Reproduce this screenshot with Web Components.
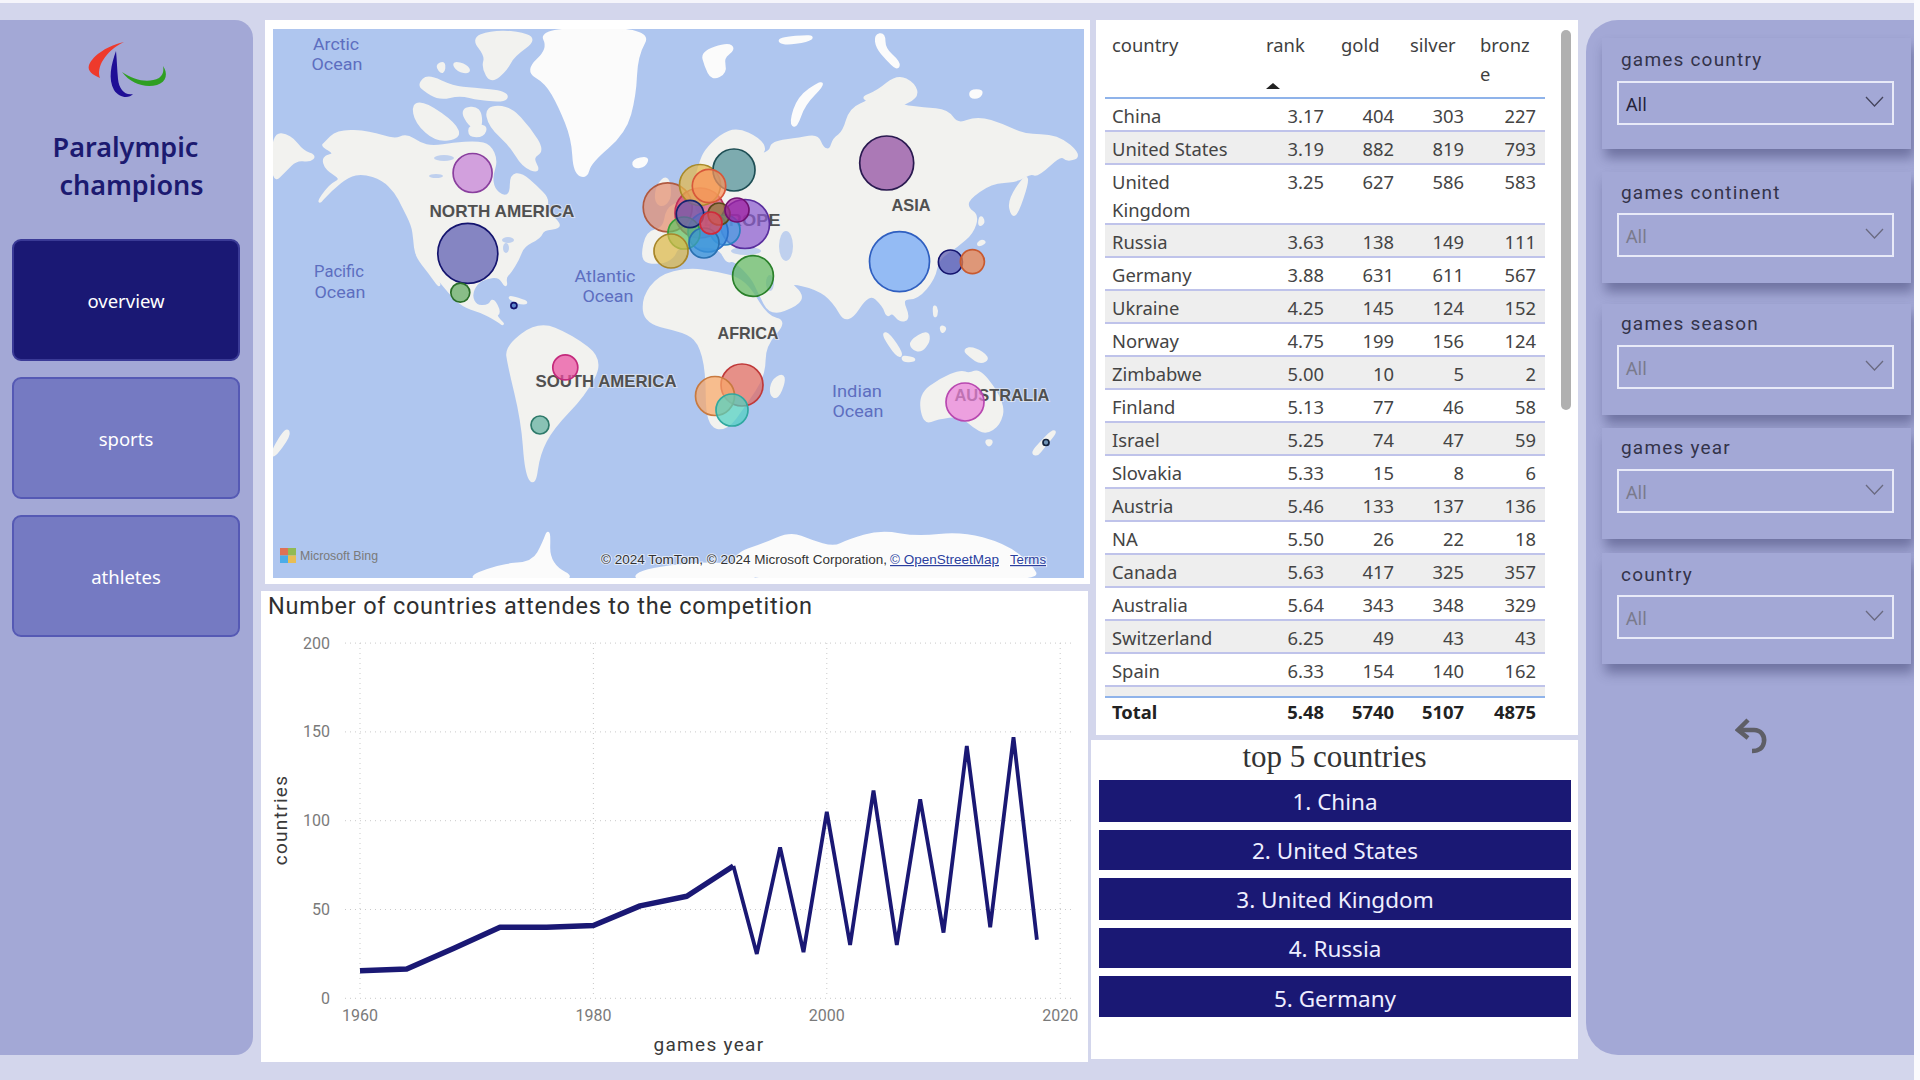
<!DOCTYPE html>
<html lang="en"><head><meta charset="utf-8"><title>Paralympic champions</title>
<style>
html,body{margin:0;padding:0;width:1920px;height:1080px;overflow:hidden;background:#d3d6ec}
body{font-family:"Noto Sans",sans-serif}
</style></head>
<body>
<dash-board>
  <nav-panel>
    <nav-button active>overview</nav-button>
    <nav-button>sports</nav-button>
    <nav-button>athletes</nav-button>
  </nav-panel>
  <map-visual slot="center"></map-visual>
  <line-chart slot="center"></line-chart>
  <medal-table slot="table"></medal-table>
  <top-list slot="table" heading="top 5 countries">
    <top-item h="42">1. China</top-item>
    <top-item h="40">2. United States</top-item>
    <top-item h="42">3. United Kingdom</top-item>
    <top-item h="40">4. Russia</top-item>
    <top-item h="41" style="padding-top:3px;box-sizing:border-box">5. Germany</top-item>
  </top-list>
  <filter-panel slot="filters">
    <slicer-card label="games country" value="All" active style="--pt:10px;--gap:9px;margin-top:0"></slicer-card>
    <slicer-card label="games continent" value="All" style="--pt:9px;--gap:8px;margin-top:23px"></slicer-card>
    <slicer-card label="games season" value="All" style="--pt:8px;--gap:9px;margin-top:21px"></slicer-card>
    <slicer-card label="games year" value="All" style="--pt:8px;--gap:9px;margin-top:13px"></slicer-card>
    <slicer-card label="country" value="All" style="--pt:10px;--gap:8px;margin-top:14px"></slicer-card>
    <undo-button></undo-button>
  </filter-panel>
</dash-board>
<script>
function def(name, html, extra){
  class C extends HTMLElement{
    constructor(){super();this.attachShadow({mode:'open'}).innerHTML=typeof html==='function'?html(this):html;}
    connectedCallback(){ if(extra) extra(this); }
  }
  customElements.define(name,C);
}

def('dash-board',`<style>
:host{display:grid;grid-template-columns:253px 830px 487px 328px 6px;column-gap:0;width:1920px;height:1080px;box-sizing:border-box;background:linear-gradient(#f5f5fb 0 3px,#d3d6ec 3px)}
.left{padding:20px 0 0 0}
.center{margin-left:8px;width:830px;padding-top:20px;display:flex;flex-direction:column;box-sizing:border-box}
.table{margin-left:8px;padding-top:20px;display:flex;flex-direction:column;box-sizing:border-box}
.filters{margin-left:16px;padding-top:20px;box-sizing:border-box}
.edge{background:#fafafd;margin-left:16px;width:6px}
</style>
<div class="left"><slot></slot></div>
<div class="center"><slot name="center"></slot></div>
<div class="table"><slot name="table"></slot></div>
<div class="filters"><slot name="filters"></slot></div>
<div class="edge"></div>`);

const logo=`<svg width="90" height="62" viewBox="0 0 90 62" aria-hidden="true">
<path d="M37 1 C22 4 6 14 2 24 C0 30 6 34 13 37 C9 27 18 10 37 1Z" fill="#ee3a2c"/>
<path d="M29 10 C24 24 21 38 27 49 C32 57 42 58 46 53 C38 55 32 48 31 38 C30 28 30 20 29 10Z" fill="#1f0f96"/>
<path d="M35 31 C48 40 62 42 72 37 C76 34 77 30 76 25 C81 32 80 41 70 44 C58 47 44 43 35 31Z" fill="#2f9f22"/>
</svg>`;
def('nav-panel',`<style>
:host{display:block;width:253px;height:1035px;box-sizing:border-box;background:#a3a8d6;border-radius:0 18px 18px 0}
.logo{padding:21px 0 0 87px;height:62px}
.logo svg{display:block}
h1{margin:25px 0 0;padding-right:2px;font:600 27px/37.500px "Noto Sans",sans-serif;color:#1c1a70;text-align:center}
h1 span{display:block}
h1 span + span{padding-left:12px}
.btns{display:flex;flex-direction:column;gap:16px;margin:36px 13px 0 12px}
</style>
<div class="logo">${logo}</div>
<h1><span>Paralympic</span><span>champions</span></h1>
<div class="btns"><slot></slot></div>`);

def('nav-button',`<style>
:host{display:flex;align-items:center;justify-content:center;height:122px;box-sizing:border-box;border-radius:9px;background:#757ac2;border:2px solid #5559b4;color:#fff;font:18.500px "Noto Sans",sans-serif}
:host([active]){background:#1a1874;border-color:#3a3a96}
</style><slot></slot>`);

/* world map: outlines traced in crops of the map, then brought to page pixels */
const A=p=>p.map(([x,y])=>[x/3+273,y/3+29]), B=p=>p.map(([x,y])=>[x/3+684,y/3+29]), Cc=p=>p.map(([x,y])=>[x/3+684,y/3+278]), Z=p=>p.map(([x,y])=>[x*.5357+260,y*.37+10]);
const P=s=>s.trim().split(/\s+/).map(t=>t.split(',').map(Number));
const land=[
A(P(`155,345 195,305 290,310 365,335 400,318 440,345 480,355 540,345 610,340 650,350 670,395 655,440 660,480 690,505 715,495 715,440 745,435 790,475 825,510 815,545 850,575 860,595 810,600 800,625 750,650 735,690 710,730 695,745 700,775 680,740 640,745 610,760 592,800 610,835 650,830 660,810 680,850 665,860 695,890 670,870 620,845 570,830 530,790 490,740 480,730 505,780 470,730 430,680 425,630 420,590 390,530 370,490 330,450 270,430 225,440 175,480 130,530 170,470 210,450 160,420 150,385 190,375 150,350`)),
A(P(`0,315 50,320 90,370 125,380 110,395 70,390 35,425 0,460`)),
A(P(`640,235 710,235 770,300 810,365 775,385 800,430 750,410 715,350 650,290`)),
A(P(`420,225 460,225 545,285 560,325 490,335 430,280`)),
A(P(`565,240 620,235 625,300 590,290`)),A(P(`590,290 640,290 630,320 590,320`)),
A(P(`600,30 650,10 730,10 790,30 720,80 700,120 655,160 630,115 640,80`)),
A(P(`440,165 465,140 540,175 600,180 700,190 700,215 620,210 560,195 500,210 450,180`)),
A(P(`540,100 580,110 590,130 555,125`)),A(P(`490,110 515,100 510,135`)),
A(P(`700,800 770,822 735,822`)),
B(P(`-125,680 -110,610 -60,600 -50,540 -10,520 25,490 50,400 65,365 110,320 160,300 225,330 245,365 210,385 260,370 265,340 350,330 400,320 415,360 440,365 450,330 480,310 500,240 560,215 535,205 580,190 640,140 690,165 700,205 640,230 720,240 790,245 820,290 880,265 960,290 1020,320 1120,320 1190,380 1150,395 1130,375 1060,440 1040,430 1000,455 920,460 850,510 850,540 880,560 865,610 820,650 760,690 750,747 700,807 650,807 675,867 650,877 625,847 610,862 600,830 555,787 490,887 450,817 400,777 310,757 355,797 340,827 260,857 225,787 205,745 150,690 130,700 110,660 70,650 -20,650 -30,680 -60,700 -110,700`)),
B(P(`-80,470 -50,440 -40,500 -60,530 -85,520`)),
B(P(`975,515 1025,440 1030,460 1000,550 985,560`)),
B(P(`890,560 900,580 885,590`)),B(P(`890,635 905,640 880,650`)),
Z(P(`715,780 745,720 800,700 850,710 905,730 945,830 982,841 941,906 941,987 904,1068 870,1135 835,1120 835,976 820,895 792,868 720,845`)),
Cc(P(`295,290 300,310 280,360 260,350 265,310`)),
Z(P(`460,910 520,845 580,880 640,945 605,1040 545,1130 520,1200 512,1285 497,1250 490,1110 465,960`)),
Cc(P(`708,350 770,305 830,280 855,290 890,275 960,380 945,440 905,465 870,445 830,410 760,420 720,435`)),
Cc(P(`905,488 925,488 915,505`)),Cc(P(`1105,460 1115,462 1075,510 1060,530 1045,525 1070,495`)),
Cc(P(`595,165 615,170 655,230 640,235`)),Cc(P(`655,235 700,245 660,250`)),Cc(P(`680,190 730,160 735,190 710,220 685,210`)),
Cc(P(`750,80 760,100 752,120`)),Cc(P(`770,145 785,150 775,165`)),Cc(P(`840,215 870,210 915,240 890,255 860,235`)),
Z(P(`24,1190 50,1130 55,1150 24,1210`))
];
const ice=[
A(P(`800,0 1135,0 1090,80 1085,200 1055,310 950,400 940,445 905,430 900,330 860,230 820,160 760,125 830,60`)),
A(P(`1080,395 1125,385 1115,410 1085,415`)),
B(P(`55,70 130,45 150,60 115,85 125,130 85,150 65,110`)),
B(P(`280,30 390,20 370,35 300,45`)),
B(P(`320,280 345,205 410,160 415,170 360,225 335,295`)),
B(P(`575,20 600,15 600,60 645,100 640,120 610,90 580,55`)),
B(P(`860,185 895,185 885,205 860,205`)),
Z(P(`370,1545 450,1500 510,1495 530,1440 540,1400 538,1500 600,1545`)),
Z(P(`690,1545 720,1510 880,1490 950,1545`)),
Cc(P(`150,830 240,800 320,765 380,790 450,810 490,790 590,760 700,780 830,765 960,800 1040,860 1065,910 150,910`))
];
const waters=[[444,158,10,3],[436,176,7,2],[508,240,6,3],[506,248,3,5],[786,246,7,15],[746,251,15,4],[700,205,5,8],[770,283,4,8]];
const smooth=pts=>{
  const m=(a,b)=>[(a[0]+b[0])/2,(a[1]+b[1])/2], f=n=>n.toFixed(1);
  const st=m(pts[pts.length-1],pts[0]);
  let d=`M${f(st[0])} ${f(st[1])}`;
  pts.forEach((p,i)=>{const e=m(p,pts[(i+1)%pts.length]);d+=`Q${f(p[0])} ${f(p[1])} ${f(e[0])} ${f(e[1])}`});
  return d+'Z';
};
const bubbles=[
[472.6,173,19.5,'#c57fd6','#8a3f9e'],[467.8,253.4,30,'#5a5ab0','#14146e'],[460.3,292.6,9.500,'#5fa85f','#2a6e2a'],[513.9,305.6,3,'#3f6fc0','#14146e'],
[565.3,367.4,12.5,'#ea4da0','#c42a7c'],[540,425,9,'#5fae9e','#2e7a6a'],
[667.7,207.3,24.5,'#e38f70','#b05a40'],[700,213,25,'#d64a7a','#c0305a'],[700,185,20.5,'#e3b84a','#a88a2a'],[734,170,21,'#4f8f95','#1f4f55'],[709,186,16.7,'#f8935c','#d8583a'],
[745,224,24.5,'#8a5bd0','#5a2f9e'],[725,230,15,'#4aa0e0','#2a80c0'],[708,232,20,'#3f8fe0','#2a70c8'],[684,233,16,'#62c062','#38a038'],
[671,251,17,'#dcb94a','#a8862a'],[704,243,15,'#3a96d8','#2a70b0'],[690,214,13.7,'#6a5ab0','#14246e'],[719,214,11,'#8a7a3a','#5a4a1a'],[737,210,12,'#a020a0','#701070'],[711,223,11,'#e84a5a','#d02a3a'],
[753,276,20.4,'#62b862','#2a802a'],[886.7,163,27,'#8f4a9f','#2a1a50'],[899.5,261.6,30,'#6fa5f5','#2f5fc0'],[950.4,262,12,'#5a5ab0','#14146e'],[972.4,261.6,12,'#f0854a','#c85a30'],
[742,385,21,'#e06a60','#c03a3a'],[715,396,19.5,'#f8a868','#c87a40'],[732,410,16,'#4fd0c0','#30a8a0'],[965,402,19,'#ea80d8','#b848b0'],[1046,442.5,3,'#3f6fa0','#14243e']
];
const ocean=(x,y,t,w)=>`<text x="${x}" y="${y}" text-anchor="middle" textLength="${w}" lengthAdjust="spacingAndGlyphs" class="oc">${t}</text>`;
const cont=(x,y,t,w)=>`<text x="${x}" y="${y}" text-anchor="middle" textLength="${w}" lengthAdjust="spacingAndGlyphs" class="ct">${t}</text>`;
def('map-visual',`<style>
:host{display:block;width:825px;height:564px;margin-left:4px;box-sizing:border-box;background:#fff;padding:9px 7px 7px 8px}
svg{display:block;width:811px;height:549px;background:#afc6ef}
.oc{font:17px Roboto,sans-serif;fill:#5d6ec0}
.ct{font:bold 17px "Liberation Sans",sans-serif;fill:#505050;stroke:#f0f0f0;stroke-width:2px;paint-order:stroke;stroke-opacity:.6}
.at{font:12px "Liberation Sans",sans-serif;fill:#333;stroke:#fff;stroke-width:2px;stroke-opacity:.6;paint-order:stroke}
.lk{fill:#2b3f9e;text-decoration:underline}
.bg{font:13px "Liberation Sans",sans-serif;fill:#7a7a7a}
.soft{filter:blur(.7px)}
</style>
<svg viewBox="273 29 811 549" role="img" aria-label="Bubble map of medals by country">
<g class="soft">
${land.map(p=>`<path d="${smooth(p)}" fill="#f2f2ef" stroke="#f2f2ef" stroke-width="3"/>`).join('')}
${ice.map(p=>`<path d="${smooth(p)}" fill="#fbfbfb" stroke="#fbfbfb" stroke-width="3"/>`).join('')}
${waters.map(w=>`<ellipse cx="${w[0]}" cy="${w[1]}" rx="${w[2]}" ry="${w[3]}" fill="#bfd0ee"/>`).join('')}
</g>
${ocean(336,50,'Arctic',46)}${ocean(337,70,'Ocean',51)}
${ocean(339,277,'Pacific',50)}${ocean(340,298,'Ocean',51)}
${ocean(605,282,'Atlantic',61)}${ocean(608,302,'Ocean',51)}
${ocean(857,397,'Indian',50)}${ocean(858,417,'Ocean',51)}
${cont(502,217,'NORTH AMERICA',145)}${cont(911,211,'ASIA',39)}${cont(742,226,'EUROPE',77)}
${cont(748,339,'AFRICA',61)}${cont(606,387,'SOUTH AMERICA',141)}${cont(1002,401,'AUSTRALIA',95)}
${bubbles.map(b=>`<circle cx="${b[0]}" cy="${b[1]}" r="${b[2]}" fill="${b[3]}" fill-opacity=".72" stroke="${b[4]}" stroke-width="1.700"/>`).join('')}
<g opacity=".85"><rect x="280" y="548" width="8" height="7.500" fill="#e8643c"/><rect x="288" y="548" width="8" height="7.500" fill="#8cb83a"/><rect x="280" y="555.500" width="8" height="7.500" fill="#3aa8e8"/><rect x="288" y="555.500" width="8" height="7.500" fill="#f2bc3a"/></g>
<text x="300" y="560" class="bg" textLength="78" lengthAdjust="spacingAndGlyphs">Microsoft Bing</text>
<text x="601" y="564" class="at" textLength="286" lengthAdjust="spacingAndGlyphs">© 2024 TomTom, © 2024 Microsoft Corporation,</text>
<text x="890" y="564" class="at lk" textLength="109" lengthAdjust="spacingAndGlyphs">© OpenStreetMap</text>
<text x="1010" y="564" class="at lk" textLength="36" lengthAdjust="spacingAndGlyphs">Terms</text>
</svg>`);

/* line chart */
const X=y=>360+(y-1960)*11.67, Y=v=>998.3-v*1.776;
const s1=[[1960,15.5],[1964,16.5],[1968,28],[1972,40],[1976,40],[1980,41],[1984,52],[1988,57.5],[1992,74.5]];
const s2=[[1992,74.5],[1994,25],[1996,85],[1998,26],[2000,105],[2002,30],[2004,117],[2006,30],[2008,112],[2010,37],[2012,142],[2014,40],[2016,147],[2018,33]];
const pts=a=>a.map(p=>X(p[0]).toFixed(1)+','+Y(p[1]).toFixed(1)).join(' ');
let grid='';
[0,50,100,150,200].forEach(v=>{grid+=`<line x1="345" x2="1072.5" y1="${Y(v)}" y2="${Y(v)}" class="g"/><text x="330" y="${Y(v)+5.5}" text-anchor="end" class="t">${v}</text>`});
[1960,1980,2000,2020].forEach(y=>{grid+=`<line x1="${X(y)}" x2="${X(y)}" y1="643" y2="998" class="g"/><text x="${X(y)}" y="1021" text-anchor="middle" class="t">${y}</text>`});
def('line-chart',`<style>
:host{display:block;width:827px;height:471px;margin-top:7px;background:#fff;box-sizing:border-box;position:relative}
h2{margin:0;padding:1px 0 0 7px;font:400 23.500px/28px Roboto,sans-serif;letter-spacing:.77px;color:#2f2f2f;white-space:nowrap}
svg{position:absolute;left:0;top:0;display:block}
.g{stroke:#c9c9c9;stroke-width:1;stroke-dasharray:1 4}
.t{font:16px Roboto,sans-serif;fill:#7a7a7a}
.a{font:19px Roboto,sans-serif;fill:#3a3a3a;letter-spacing:1.3px}
</style>
<h2>Number of countries attendes to the competition</h2>
<svg width="827" height="471" viewBox="261 591 827 471" aria-label="Line chart">
${grid}
<polyline points="${pts(s1)}" fill="none" stroke="#1a1874" stroke-width="5.500" stroke-linejoin="round"/>
<polyline points="${pts(s2)}" fill="none" stroke="#1a1874" stroke-width="3.800" stroke-linejoin="miter"/>
<text x="709" y="1051" text-anchor="middle" class="a">games year</text>
<text transform="translate(287 820) rotate(-90)" text-anchor="middle" class="a">countries</text>
</svg>`);

/* table */
const rows=[["China","3.17",404,303,227],["United States","3.19",882,819,793],["United Kingdom","3.25",627,586,583],["Russia","3.63",138,149,111],["Germany","3.88",631,611,567],["Ukraine","4.25",145,124,152],["Norway","4.75",199,156,124],["Zimbabwe","5.00",10,5,2],["Finland","5.13",77,46,58],["Israel","5.25",74,47,59],["Slovakia","5.33",15,8,6],["Austria","5.46",133,137,136],["NA","5.50",26,22,18],["Canada","5.63",417,325,357],["Australia","5.64",343,348,329],["Switzerland","6.25",49,43,43],["Spain","6.33",154,140,162]];
const cols='grid-template-columns:153px 75px 70px 70px 72px';
def('medal-table',`<style>
:host{display:block;width:482px;height:715px;margin-left:5px;background:#fff;box-sizing:border-box;padding:11px 0 0 9px;position:relative;font:18.400px/28.500px "Noto Sans",sans-serif;color:#444}
.t{width:440px}
.r{display:grid;${cols};box-sizing:border-box}
.h{height:68px;border-bottom:2px solid #8fb3ea;color:#3f3f3f}
.h>div{padding-left:7px;position:relative}
.h>div:nth-child(2),.h>div:nth-child(3){padding-left:8px}
.h .b{word-break:break-all;padding-right:8px}
.arr{position:absolute;left:8px;top:52px;width:0;height:0;border:7px solid transparent;border-top:0;border-bottom:6px solid #222}
.d{height:33px;border-bottom:2px solid #bfc3ea;align-items:start;padding-top:3px}
.d.uk{height:60px}
.d.alt{background:#eeeeee}
.d>div{text-align:right;padding-right:9px}
.d>div:first-child{text-align:left;padding:0 8px 0 7px;overflow-wrap:break-word}
.d.uk>div:first-child{line-height:28px}
.band{height:9px;background:#eee;border-bottom:2px solid #8fb3ea}
.f{font-weight:700;color:#222;height:34px}
.f>div{text-align:right;padding-right:9px}
.f>div:first-child{text-align:left;padding-left:7px}
.sb{position:absolute;left:465px;top:10px;width:10px;height:380px;background:#b0b0b0;border-radius:5px}
</style>
<div class="t">
<div class="r h"><div>country</div><div>rank<i class="arr"></i></div><div>gold</div><div>silver</div><div class="b">bronze</div></div>
${rows.map((r,i)=>`<div class="r d${i%2?' alt':''}${r[0]==='United Kingdom'?' uk':''}">${r.map(c=>`<div>${c}</div>`).join('')}</div>`).join('')}
<div class="band"></div>
<div class="r f"><div>Total</div><div>5.48</div><div>5740</div><div>5107</div><div>4875</div></div>
</div>
<div class="sb"></div>`);

def('top-list',(el)=>`<style>
:host{display:block;width:487px;height:319px;margin-top:5px;background:#fff;box-sizing:border-box;padding:0 8px}
h3{margin:0;height:40px;font:400 31px/33px "Liberation Serif",serif;color:#333;text-align:center}
.l{display:flex;flex-direction:column;gap:8px}
</style>
<h3>${el.getAttribute('heading')||''}</h3><div class="l"><slot></slot></div>`);

def('top-item',`<style>
:host{display:flex;align-items:center;justify-content:center;height:41px;background:#1a1874;color:#eef;font:22.500px "Noto Sans",sans-serif;width:472px}
</style><slot></slot>`,el=>{el.style.height=el.getAttribute('h')+'px'});

def('filter-panel',`<style>
:host{display:block;width:328px;height:1035px;box-sizing:border-box;background:#a3a8d6;border-radius:32px 0 0 32px;padding:18px 3px 0 16px;overflow:hidden}
</style><slot></slot>`);

const chev=c=>`<svg width="19" height="11" viewBox="0 0 19 11"><path d="M1 1L9.500 10L18 1" fill="none" stroke="${c}" stroke-width="1.300"/></svg>`;
def('slicer-card',(el)=>{const a=el.hasAttribute('active');return `<style>
:host{display:block;height:111px;background:#a3a8d6;box-shadow:3px 9px 11px rgba(40,44,90,.42);box-sizing:border-box;padding-top:var(--pt,10px);position:relative}
.lb{padding-left:19px;font:19px/24px Roboto,sans-serif;letter-spacing:1.2px;color:#33334a}
.bx{margin:var(--gap,9px) 0 0 15px;width:277px;height:44px;box-sizing:border-box;border:2px solid #e8eaf8;display:flex;align-items:center;justify-content:space-between;padding:2px 8px 0 7px;font:18px "Noto Sans",sans-serif;color:${a?'#22223a':'#7a7a8c'}}
.bx svg{margin-top:-5px}
</style><div class="lb">${el.getAttribute('label')}</div><div class="bx"><span>${el.getAttribute('value')}</span>${chev(a?'#44445c':'#6a6a80')}</div>`});

def('undo-button',`<style>
:host{display:block;margin:54px 0 0 133px;width:34px;height:36px}
svg{display:block}
</style><svg width="34" height="36" viewBox="0 0 34 36" fill="none" stroke="#5e5e66" stroke-width="4.500"><path d="M13 2L3 12L13 20"/><path d="M3 12H19C26 12 30 18 29 24C28 30 24 33 17 33"/></svg>`);
</script>
</body></html>
